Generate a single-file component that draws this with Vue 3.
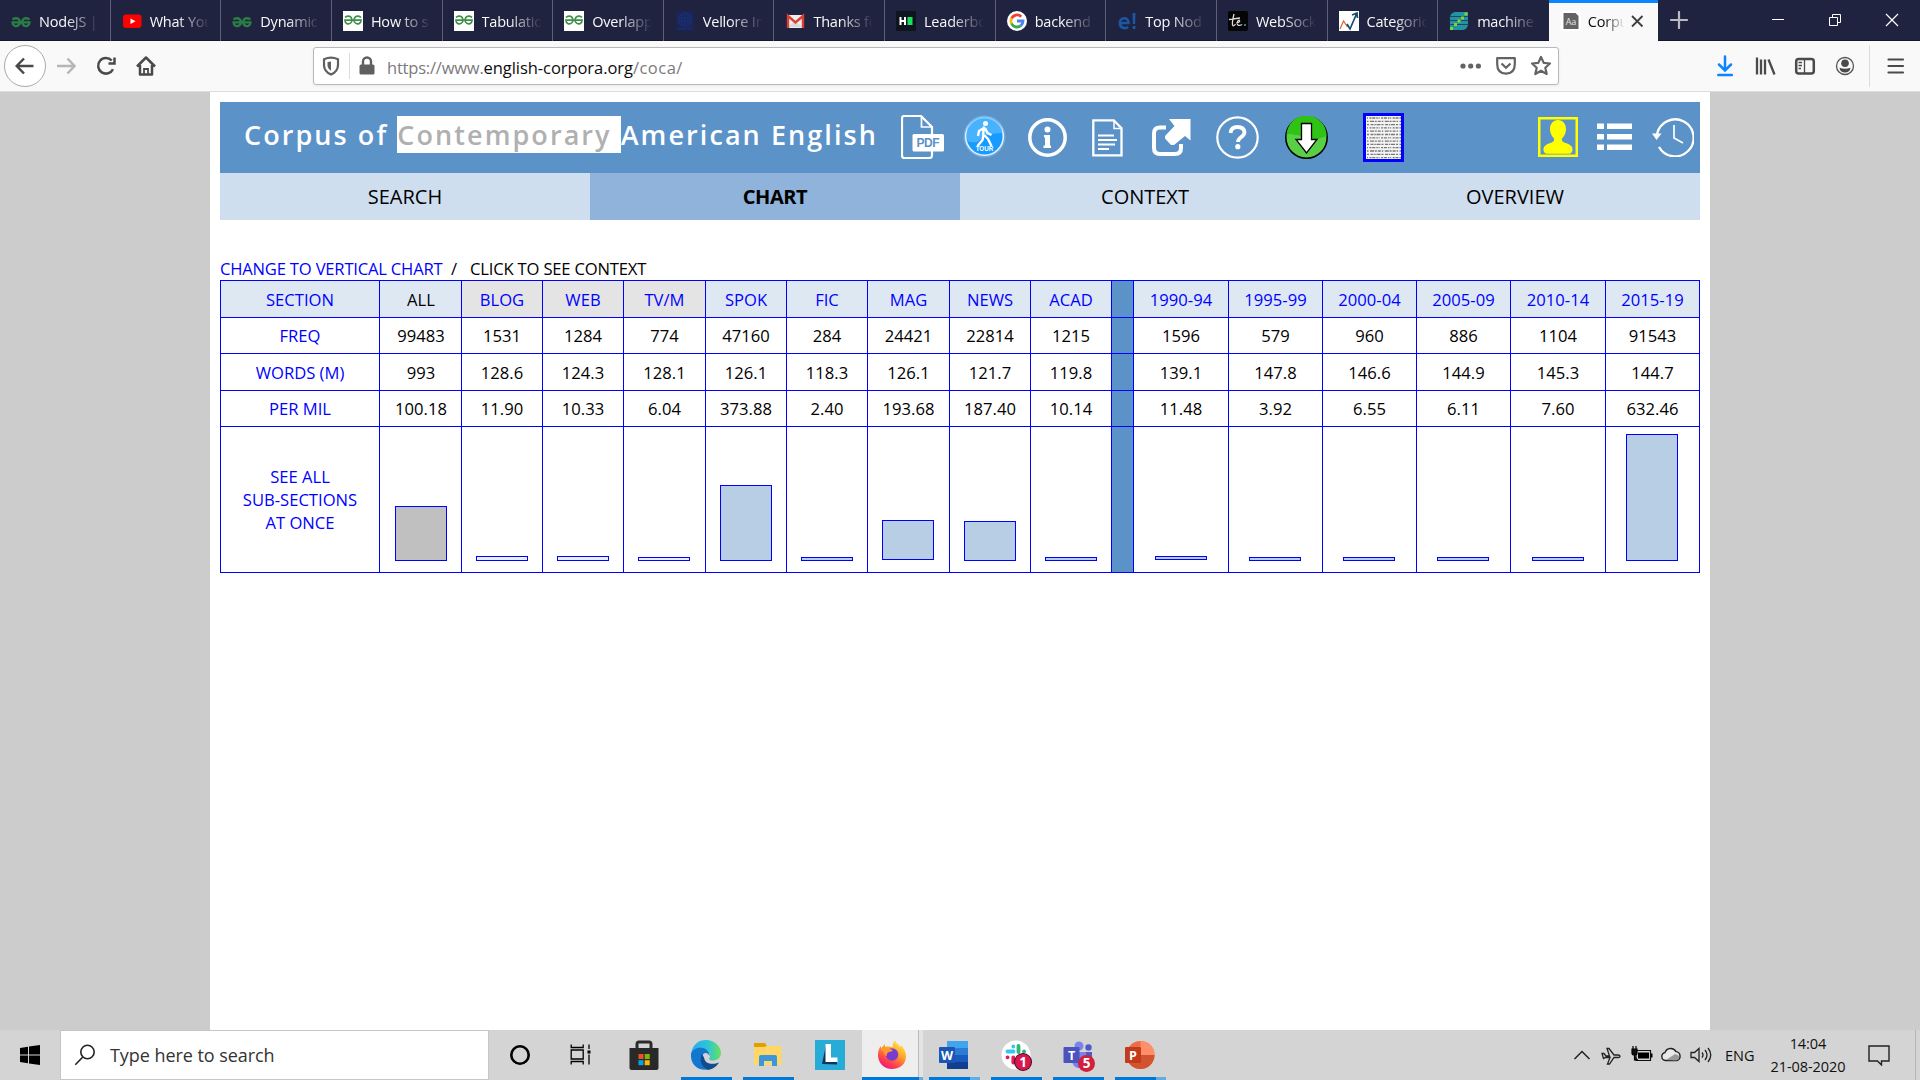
<script setup>
const gfg = (c, w = 1.7) => `<g fill="none" stroke="${c}" stroke-width="${w}"><path d="M1.500 7Q5 4.800 7.500 6.500Q9.500 8.500 8.500 11.500Q6.500 14.500 3.500 13.200Q1.500 12 1.500 9.800H18.500Q18.500 12 16.500 13.200Q13.500 14.500 11.500 11.500Q10.500 8.500 12.500 6.500Q15 4.800 18.500 7"/></g>`
const gfgDark = `<g transform="translate(0 1.500)">${gfg('#2b7d46', 2.3)}</g>`
const gfgBox = '<path fill="#fff" d="M0 0h20v20H0z"/><g transform="translate(.5 -.6) scale(.95 1)">' + gfg('#3f8f49') + '</g>'
const tabs = [
  { title: 'NodeJS |', icon: gfgDark },
  { title: 'What You', icon: '<rect x="1" y="3.500" width="18.500" height="13.500" rx="3" fill="#f00"/><path fill="#fff" d="m8.500 7.500 5 2.800-5 2.800z"/>' },
  { title: 'Dynamic', icon: gfgDark },
  { title: 'How to s', icon: gfgBox },
  { title: 'Tabulatio', icon: gfgBox },
  { title: 'Overlapp', icon: gfgBox },
  { title: 'Vellore In', icon: '<path fill="#1c2452" d="M1 0h18v20H1z"/><g fill="none" stroke="#172f72" stroke-width="1.500"><circle cx="10" cy="8.500" r="6.500"/><path d="M4 7h12M4 10h12M7 4v9m3-11v12m3-10v9M3 17.500h14"/></g>' },
  { title: 'Thanks fo', icon: '<path fill="#eee" d="M2 4h17v13H2z"/><path fill="#d8d8d8" d="m3 16 7-6 7 6z"/><path fill="none" stroke="#d93f33" stroke-width="2.400" d="M3 17V5l7.500 6.500L18 5v12"/>' },
  { title: 'Leaderbo', icon: '<path fill="#0e151f" d="M0 0h20v20H0z"/><path fill="#fff" d="M3.500 6h2v3H8V6h2v8H8v-3H5.500v3h-2z"/><path fill="#1be05f" d="M11.500 6h5v8h-5z"/>' },
  { title: 'backend', icon: '<circle cx="10" cy="10" r="10" fill="#fff"/><g fill="none" stroke-width="2.800"><path stroke="#ea4335" d="M4.500 7.500A6 6 0 0 1 14.200 5.700"/><path stroke="#fbbc05" d="M4.500 7.400a6 6 0 0 0 0 5.200"/><path stroke="#34a853" d="M4.500 12.500a6 6 0 0 0 9.300 2.100"/><path stroke="#4285f4" d="M10 10h6a6 6 0 0 1-2.200 4.600"/></g>' },
  { title: 'Top Nod', icon: '<g fill="none" stroke="#1a57a5" stroke-width="2.600"><path d="M3 12h8.500C11.500 5.500 3 6 2.800 12c0 5.500 6 6 8.200 3.800"/></g><path fill="#1a57a5" d="M15.500 2h3l-.4 11h-2.200zM15.700 15h2.700v3h-2.700z"/>' },
  { title: 'WebSock', icon: '<rect width="20" height="20" rx="2" fill="#050505"/><path fill="none" stroke="#ddd" stroke-width="1.300" d="M1 8.500 12 7M6 3Q4 11 4.500 14q1 2 3-1m1-1q4-1 3-2.500T9 12q.5 4 5 1.500"/><path fill="#277a9c" d="M16 13h2v2h-2z"/>' },
  { title: 'Categoric', icon: '<path fill="#fff" d="M0 0h20v20H0z"/><path fill="none" stroke="#e0663f" stroke-width="1.300" d="m1 18 3.500-8 4 6"/><path fill="none" stroke="#164a78" stroke-width="1.700" d="m8 13 3 5 6.500-15M13 4l5-2 .5 5"/>' },
  { title: 'machine', icon: '<path fill="#2492a5" d="M6 1h13v13q-1 5-6 5H1V7q0-5 5-6z"/><path stroke="#1d3350" stroke-width=".8" d="M0 5.500h20M0 9.500h20M0 13.500h20"/><path fill="#86d22f" d="M15.500 1.500h3v3h-3zM12 5.500h3v3h-3zM8.500 8.500h3v3h-3zM5 12h3v3H5zM1 16h3v3H1z"/>' },
]

const sections = [
  { name: 'ALL', freq: '99483', words: '993', mil: '100.18', bar: 55, kind: 'all' },
  { name: 'BLOG', freq: '1531', words: '128.6', mil: '11.90', bar: 5, kind: 'web' },
  { name: 'WEB', freq: '1284', words: '124.3', mil: '10.33', bar: 5, kind: 'web' },
  { name: 'TV/M', freq: '774', words: '128.1', mil: '6.04', bar: 4, kind: 'web' },
  { name: 'SPOK', freq: '47160', words: '126.1', mil: '373.88', bar: 76 },
  { name: 'FIC', freq: '284', words: '118.3', mil: '2.40', bar: 4 },
  { name: 'MAG', freq: '24421', words: '126.1', mil: '193.68', bar: 40, kind: 'raised' },
  { name: 'NEWS', freq: '22814', words: '121.7', mil: '187.40', bar: 40 },
  { name: 'ACAD', freq: '1215', words: '119.8', mil: '10.14', bar: 4 },
  { name: '', freq: '', words: '', mil: '', kind: 'gap' },
  { name: '1990-94', freq: '1596', words: '139.1', mil: '11.48', bar: 4, kind: 'raised' },
  { name: '1995-99', freq: '579', words: '147.8', mil: '3.92', bar: 4 },
  { name: '2000-04', freq: '960', words: '146.6', mil: '6.55', bar: 4 },
  { name: '2005-09', freq: '886', words: '144.9', mil: '6.11', bar: 4 },
  { name: '2010-14', freq: '1104', words: '145.3', mil: '7.60', bar: 4 },
  { name: '2015-19', freq: '91543', words: '144.7', mil: '632.46', bar: 127 },
]
const rows = [
  { label: 'FREQ', key: 'freq' },
  { label: 'WORDS (M)', key: 'words' },
  { label: 'PER MIL', key: 'mil' },
]
const scanLines = Array.from({ length: 13 }, (_, i) => 4 + i * 3.3)

const apps = [
  { name: 'cortana', icon: '<ellipse cx="15" cy="15" rx="8.700" ry="8.700" fill="none" stroke="#000" stroke-width="2.600"/>' },
  { name: 'taskview', icon: '<g transform="translate(-1.500 -.5)"><g fill="none" stroke="#000" stroke-width="1.300"><path d="M5.700 5v3h12V5M5.700 25v-3h12v3M5.700 10.500h12v9h-12zM23.500 5v4.500M23.500 15v10"/></g><path d="M22 11h3v3h-3z"/></g>' },
  { name: 'store', icon: '<path fill="none" stroke="#2b2b2b" stroke-width="3" d="M8 9V4q0-2 2-2h10q2 0 2 2v5"/><path fill="#292929" d="M.5 8h29v20q0 2-2 2h-25q-2 0-2-2z"/><path fill="#f25022" d="M9.500 14h5v5h-5z"/><path fill="#7fba00" d="M15.700 14h5v5h-5z"/><path fill="#00a4ef" d="M9.500 20.200h5v5h-5z"/><path fill="#ffb900" d="M15.700 20.200h5v5h-5z"/>' },
  { name: 'edge', run: true, icon: '<defs><linearGradient id="e1" x1="0" x2="1"><stop stop-color="#2fa9ea"/><stop offset=".55" stop-color="#2cc5d8"/><stop offset="1" stop-color="#6be05a"/></linearGradient></defs><path fill="url(#e1)" d="M0 15C1 4 8 0 15 0c9 0 15 7 15 13 0 5-4 7.500-8 7.500-5 0-4-2-3-4C20 12 15 8 10 9Q4 9 0 15z"/><path fill="#1277cf" d="M0 14C2 8 8 7 12 8c5 1.500 7 5 6.500 8-2-5-7-3.500-7.500 1-.6 6 5 11 12 10C14 33 1 29 0 17z"/><path fill="#134b8f" d="M11 14c-3 5-1 13 6 15.900 5-.9 9-4 11-7.500-6 2.500-14 2-15-5z"/>' },
  { name: 'files', run: true, icon: '<path fill="#e2a000" d="M1 3h11l2 3v3H1z"/><path fill="#ffd767" d="M1 7h10l3-1h14.500v19H1z"/><path fill="#3c96db" d="M6 26V17q0-2 2-2h14q2 0 2 2v9h-5v-5h-8v5z"/>' },
  { name: 'lapp', icon: '<path fill="#27acd8" d="M0 0h30v30H0z"/><path fill="#10345f" d="m11 5-4 19 15 .5V21l-9-1z"/><path fill="#fff" d="M10.500 4H16v13.500h6.500V22h-12z"/>' },
  { name: 'firefox', state: 'active', run: true, icon: '<defs><linearGradient id="f1" x1=".8" x2=".2" y2="1"><stop stop-color="#fff44f"/><stop offset=".4" stop-color="#ffa22b"/><stop offset=".75" stop-color="#ff3d4f"/><stop offset="1" stop-color="#e31587"/></linearGradient></defs><path fill="url(#f1)" d="M18 0c1 4 4 4.500 6 7V5c3 3 5 7 5 11 0 8-6 13-14 13S1 23 1 15c0-4 1-7 3-9v3c1-2 3-4 4-5v3c3-1 6 0 8 0-1-3 1-5 2-7z"/><circle cx="15" cy="14.500" r="6.200" fill="#7a3bd0"/><path fill="#ff9a2e" d="M3 9q6-3 10 0l3 1q-1 2-4 2-3 1-2 4-3-1-3-4z"/>' },
  { name: 'word', run: true, more: true, icon: '<path fill="#41a5ee" d="M8 1h21v7H8z"/><path fill="#2b7cd3" d="M8 8h21v7H8z"/><path fill="#185abd" d="M8 15h21v7H8z"/><path fill="#103f91" d="M8 22h21v7H8z"/><rect y="7" width="16" height="16" rx="1" fill="#1b56b6"/><text x="8" y="19.500" text-anchor="middle" font-size="12.500" font-weight="700" fill="#fff" font-family="Open Sans,sans-serif">W</text>' },
  { name: 'slack', run: true, badge: '1', icon: '<circle cx="15" cy="15" r="14.500" fill="#fff"/><g stroke-width="3.800" stroke-linecap="round"><path stroke="#36c5f0" d="M12.300 6.500v.1M6.500 11.500h6"/><path stroke="#2eb67d" d="M17.500 6v6M23 11.500h.1"/><path stroke="#e01e5a" d="M12.300 17.500v5M6.500 17.300h.1"/><path stroke="#ecb22e" d="M17.500 17.500h6M17.500 23v.1"/></g>' },
  { name: 'teams', run: true, badge: '5', icon: '<circle cx="16" cy="6" r="4.500" fill="#7b83eb"/><circle cx="25.500" cy="7.500" r="3.200" fill="#5059c9"/><path fill="#7b83eb" d="M9 12h14v10q-1 6-7 6-5 0-7-6z"/><path fill="#5059c9" d="M23 12h6v9q-1 4-6 3z"/><rect x=".5" y="7" width="16" height="16" rx="1" fill="#4b53bc"/><text x="8.500" y="19.500" text-anchor="middle" font-size="12.500" font-weight="700" fill="#fff" font-family="Open Sans,sans-serif">T</text>' },
  { name: 'powerpoint', run: true, more: true, icon: '<circle cx="15.500" cy="15" r="14" fill="#ed6c47"/><path fill="#ff8f6b" d="M15.500 1a14 14 0 0 1 14 14h-14z"/><path fill="#d35230" d="M1.500 15h28a14 14 0 0 1-28 0z"/><rect y="7" width="16" height="16" rx="1" fill="#c13b1b"/><text x="8" y="19.500" text-anchor="middle" font-size="12.500" font-weight="700" fill="#fff" font-family="Open Sans,sans-serif">P</text>' },
]
</script>

<template>
  <div class="screen">
    <div class="tabstrip">
      <div v-for="t in tabs" :key="t.title" class="tab">
        <svg width="20" height="20" v-html="t.icon"></svg>
        <span class="tab-title">{{ t.title }}</span>
      </div>
      <div class="tab current">
        <svg width="20" height="20"><path fill="#fff" d="M0 0h20v20H0z" /><path fill="#636363" d="M2.500 2h12l3 3v13h-15z" /><text x="10" y="14.200" text-anchor="middle" font-size="9" fill="#e4e4e4" font-family="Open Sans,sans-serif">Aa</text></svg>
        <span class="tab-title">Corpu</span>
        <svg class="tab-close" width="14" height="14"><path d="m2 2 10.500 10.500M12.500 2 2 12.500" stroke="#3f3f42" stroke-width="1.800" /></svg>
      </div>
      <svg class="newtab" width="18" height="18"><path d="M9 1v16M1 9h16" stroke="#b9bac6" stroke-width="2.200" stroke-linecap="round" /></svg>
      <div class="winctl">
        <svg width="14" height="14" stroke="#fff" fill="none"><path d="M1 6.500h12" /></svg>
        <svg width="14" height="14" stroke="#fff" fill="none"><path d="M1.500 4.500h8v8h-8zM4.500 4.500v-3h8v8h-3" /></svg>
        <svg width="14" height="14" stroke="#fff" fill="none"><path d="m1 1 12 12M13 1 1 13" stroke-width="1.200" /></svg>
      </div>
    </div>

    <div class="toolbar">
      <div class="back"><svg width="20" height="20" class="ic"><path d="M18.500 10H2M9 2.500 1.700 10 9 17.500" /></svg></div>
      <svg width="20" height="20" class="ic fwd"><path d="M1 10h17M11.500 2.500 18.500 10l-7 7.500" /></svg>
      <svg width="20" height="20" class="ic reload"><path d="M17 13.200A7.800 7.800 0 1 1 15.700 4.500M18.500 1.500v6h-6" /></svg>
      <svg width="20" height="20" class="ic home"><path d="M1 10.500 10 1.500l9 9M4 9v9.500h12V9" stroke-linejoin="round" /><path d="M8 19v-6h4v6" stroke-width="1.800" /></svg>
      <div class="urlbar">
        <svg width="18" height="20" class="shield"><path d="M2 3.200Q9 .2 16 3.200V9q0 6.500-7 9.500-7-3-7-9.500z" fill="none" stroke="#606060" stroke-width="2.200" /><path d="M9 5.500Q7 5.600 5.500 6.300V9Q5.500 12.500 9 14.800z" fill="#606060" /></svg>
        <i class="usep"></i>
        <svg width="18" height="20" class="lock"><rect x="1.500" y="8.500" width="15" height="10" rx="1.500" fill="#606060" /><path d="M5 9V5.500a4 4 0 0 1 8 0V9" fill="none" stroke="#606060" stroke-width="2.400" /></svg>
        <span class="url">https://www.<b>english-corpora.org</b><span class="path">/coca/</span></span>
        <svg width="22" height="6" class="dots"><circle cx="3" cy="3" r="2.600" /><circle cx="10.700" cy="3" r="2.600" /><circle cx="18.400" cy="3" r="2.600" /></svg>
        <svg width="22" height="20" class="ic g"><path d="M2.200 2.200h17.600v6q0 9-8.800 9.500-8.800-.5-8.800-9.500z" stroke-linejoin="round" /><path d="m6.500 7.500 4.500 4.300 4.500-4.300" /></svg>
        <svg width="22" height="22" class="ic g star"><path d="m11 2 2.700 5.900 6.300.6-4.700 4.200 1.400 6.300-5.700-3.300L5.300 19l1.400-6.300L2 8.500l6.300-.6z" stroke-linejoin="round" /></svg>
      </div>
      <div class="tools">
        <svg width="20" height="22" class="ic dl"><path d="M10 1.500v13M4 9.500l6 6 6-6M3.300 20h13.500" stroke-linecap="round" /></svg>
        <svg width="22" height="20" class="ic"><path d="M2 1.500v17M6 3.500v15M10 3.500v15M13.500 3.500l6 15" stroke-width="2.300" /></svg>
        <svg width="22" height="20" class="ic"><rect x="2.200" y="3" width="17.600" height="14.500" rx="2.500" /><path d="M10.500 3v14.500M4.500 6.500h3.500M4.500 9.500h3.500M4.500 12.500h2.500" stroke-width="1.300" /></svg>
        <svg width="20" height="20"><circle cx="10" cy="10" r="8.500" fill="none" stroke="#555" stroke-width="1.300" /><circle cx="10" cy="7.300" r="3.800" fill="#4a4a4a" /><path d="M4.500 11.700q5.500 2 11 0Q15 16.500 10 16.500t-5.500-4.800z" fill="#4a4a4a" /></svg>
        <i class="tsep"></i>
        <svg width="18" height="18" class="ic"><path d="M1.500 2.500h14.500M1.500 9h14.500M1.500 15.500h14.500" stroke-linecap="round" stroke-width="2.200" /></svg>
      </div>
    </div>

    <div class="viewport">
      <div class="page">
        <header class="banner">
          <h1>Corpus of <mark>Contemporary </mark>American English</h1>
          <div class="tools-left">
            <svg width="43" height="44" class="i-pdf"><path d="M31 35v5.500q0 2.500-2.500 2.500H3.500Q1 43 1 40.500v-37Q1 1 3.500 1H20l11 11v7" fill="none" stroke="#fff" stroke-width="2.200" /><path d="M20.500 1.500V12H31" fill="none" stroke="#fff" stroke-width="1.700" /><rect x="11.500" y="19" width="31.500" height="17.500" rx="1.500" fill="#fff" /><text x="27" y="32" text-anchor="middle" textLength="23" font-size="12" font-weight="700" fill="#5b92c8" font-family="Liberation Sans,sans-serif">PDF</text></svg>
            <svg width="43" height="43" class="i-tour"><circle cx="21.500" cy="21.500" r="21" fill="#7aa9d8" /><circle cx="21.500" cy="21.500" r="18.800" fill="#189bff" stroke="#e6f3ff" stroke-width="1.500" /><path d="M3.500 20a18 18 0 0 1 36-2q-18 0-25 9-6 1-10-1z" fill="#5ebcff" opacity=".7" /><circle cx="22.500" cy="8.500" r="2.500" fill="#fff" /><path d="m21 11.500-1 9M21 13l-5 3-1 5M22 13l2.500 5 4 2M20.500 20l-1 5-5 6M21 20l4 4 3.500 7" fill="none" stroke="#fff" stroke-width="2.400" /><text x="21.500" y="36" text-anchor="middle" font-size="6.300" font-weight="700" fill="#fff" font-family="Liberation Sans,sans-serif">TOUR</text></svg>
            <svg width="39" height="39" class="i-info"><circle cx="19.500" cy="19.500" r="17.700" fill="none" stroke="#fff" stroke-width="3.500" /><circle cx="19.500" cy="11.500" r="3" fill="#fff" /><path d="M16 17h6v10.500h1V30h-7.500v-2.500H17v-8h-1z" fill="#fff" /></svg>
            <svg width="31" height="38" class="i-doc"><path d="M1.300 1.300h20.500l7.700 8v27H1.300z" fill="none" stroke="#fff" stroke-width="2.300" /><path d="M22 1v8.500h8" fill="none" stroke="#fff" stroke-width="1.500" /><path d="M6 16.500h16M6 21h19M6 25.500h17M6 30h11" stroke="#fff" stroke-width="1.900" /></svg>
            <svg width="39" height="38" class="i-ext"><path d="M14 8.500H8q-6 0-6 6V29q0 6 6 6h15q6 0 6-6v-4" fill="none" stroke="#fff" stroke-width="4" /><path d="M17 0h21.500v21.500L33 17l-11 9h-3l-6-6.500v-2.500L22.500 7z" fill="#fff" /></svg>
            <svg width="43" height="43" class="i-help"><circle cx="21.500" cy="21.500" r="20.200" fill="none" stroke="#fff" stroke-width="2.200" /><path d="M14.500 17q.5-6 7-6t7 5.300c0 4.700-6.500 4.700-6.500 9.700" fill="none" stroke="#fff" stroke-width="3.800" /><circle cx="21.800" cy="30.700" r="2.600" fill="#fff" /></svg>
            <svg width="43" height="43" class="i-down"><circle cx="21.500" cy="21.500" r="20.700" fill="#59cf45" stroke="#000" stroke-width="1.500" /><path d="M1.500 19a20 20 0 0 1 40 1Q32 23 22 27q-5-9-12-8-5-2-8.500 0z" fill="#2fc315" /><path d="M16.500 7.500h10v16H32L21.500 37 11 23.500h5.500z" fill="#fff" stroke="#000" stroke-width="1.300" /></svg>
            <svg width="41" height="49" class="i-scan"><path fill="#00f" d="M0 0h41v49H0z" /><path fill="#f4f4f4" d="M3 3h35v43H3z" /><g stroke="#777" stroke-width="1.300"><path v-for="(y, i) in scanLines" :key="y" :d="`M4 ${y + 1}h34`" :stroke-dasharray="i % 3 === 0 ? '1 1.500 2 .8 3 1 1.500 .8' : i % 3 === 1 ? '1.500 1.500 4 .8 2 1 3 1' : '2 1.500 3 .8 1.500 .7 4 1'" /></g></svg>
          </div>
          <div class="tools-right">
            <svg width="40" height="40"><path d="M1.250 1.250h37.500v37.500H1.250z" fill="none" stroke="#ff0" stroke-width="2.500" /><path d="M20 3c5 0 8 4 8 9 0 4-1.500 7-4 9.500-.5 3 1.500 4 5 5 4 1.300 6 4 5.500 7-.5 2.500-2 3.300-4 3.300h-21c-2 0-3.500-.8-4-3.300-.5-3 1.500-5.700 5.500-7 3.500-1 5.500-2 5-5C13.500 19 12 16 12 12c0-5 3-9 8-9z" fill="#ff0" /></svg>
            <svg width="36" height="28"><path d="M0 .5h7v5.500H0zM10 .5h25v5.500H10zM0 11h7v5.500H0zM10 11h25v5.500H10zM0 21.500h7V27H0zM10 21.500h25V27H10z" fill="#fff" /></svg>
            <svg width="42" height="40"><path d="M5 17A18.500 18.500 0 1 1 7 30" fill="none" stroke="#fff" stroke-width="2.300" /><path d="M0 16.500h9.500l-5 6.500z" fill="#fff" /><path d="M22 8v13l9 5" fill="none" stroke="#fff" stroke-width="1.700" /></svg>
          </div>
        </header>
        <nav class="nav">
          <a>SEARCH</a><a class="on">CHART</a><a>CONTEXT</a><a>OVERVIEW</a>
        </nav>
        <p class="links"><a>CHANGE TO VERTICAL CHART</a><span class="slash">/</span><span class="click">CLICK TO SEE CONTEXT</span></p>
        <div class="grid">
          <div class="c head lbl">SECTION</div>
          <div v-for="(s, i) in sections" :key="'h' + i" class="c head lbl" :class="s.kind">{{ s.name }}</div>
          <template v-for="r in rows" :key="r.key">
            <div class="c lbl">{{ r.label }}</div>
            <div v-for="(s, i) in sections" :key="r.key + i" class="c" :class="s.kind">{{ s[r.key] }}</div>
          </template>
          <div class="c lbl see">SEE ALL<br />SUB-SECTIONS<br />AT ONCE</div>
          <div v-for="(s, i) in sections" :key="'b' + i" class="c barcell" :class="s.kind">
            <div v-if="s.bar" class="bar" :style="{ height: s.bar + 'px' }"></div>
          </div>
        </div>
      </div>
    </div>

    <div class="taskbar">
      <div class="start"><svg width="20" height="20"><path d="m0 3 8-1.200v7.700H0zM9 1.600 20 0v9.500H9zM0 10.500h8v7.700L0 17zM9 10.500h11V20L9 18.400z" /></svg></div>
      <div class="search">
        <svg width="22" height="22"><circle cx="13.500" cy="8" r="6.700" fill="none" stroke="#222" stroke-width="1.600" /><path d="m8.800 13-7.500 7.800" stroke="#222" stroke-width="1.600" /></svg>
        <span>Type here to search</span>
      </div>
      <div v-for="a in apps" :key="a.name" class="app" :class="[a.state, { run: a.run, more: a.more }]">
        <svg width="30" height="30" v-html="a.icon"></svg>
        <span v-if="a.badge" class="badge" :class="'b-' + a.name">{{ a.badge }}</span>
      </div>
      <div class="tray">
        <svg width="18" height="12" class="t-chev"><path d="m1.500 10 7.500-7.500 7.500 7.500" fill="none" stroke="#222" stroke-width="1.500" /></svg>
        <svg width="20" height="20" class="t-air"><path d="M1 8.500h2l2 2.500h3.500L6 3.500h2l5 6.500h4q2 0 2 1.300t-2 1.200h-4l-4.500 6.500h-2L9 12.500H4.500L2.500 13.500z" fill="none" stroke="#222" stroke-width="1.300" /></svg>
        <svg width="22" height="18" class="t-bat"><path d="M5 4.500h14.500v10H5z" fill="none" stroke="#111" stroke-width="1.200" /><path d="M7 6.500h11v6H7z" /><path d="M20 7.500h1.500v4H20z" /><path d="M1 3v4q0 2 2.500 2T6 7V3zM3.500 9v5H7M2 0v3M5 0v3" stroke="#000" stroke-width="1.200" fill="#111" /></svg>
        <svg width="22" height="16" class="t-cloud"><path d="M5.500 13.500a4 4 0 0 1-.5-7.900 6 6 0 0 1 11-1 4.600 4.600 0 0 1 1 8.900z" fill="#e9e9e9" stroke="#222" stroke-width="1.400" /><path d="m6 13 9-6q5 1 4 4-.5 2-3 2.500z" fill="#999" /></svg>
        <svg width="22" height="18" class="t-spk"><path d="M1 6.500h3.500L9 2.500v13L4.500 11.500H1z" fill="none" stroke="#222" stroke-width="1.300" /><path d="M12 6.500q2 2.500 0 5M15 4q4 5 0 10M18 2q5.500 7 0 14" fill="none" stroke="#222" stroke-width="1.300" /></svg>
        <span class="lang">ENG</span>
        <div class="clock"><span>14:04</span><span class="date">21-08-2020</span></div>
        <svg width="22" height="22" class="t-note"><path d="M1 2h20v15h-7.500v4l-4-4H1z" fill="none" stroke="#222" stroke-width="1.400" /></svg>
        <i class="peek"></i>
      </div>
    </div>
  </div>
</template>

<style>
body { margin: 0; overflow: hidden; }
</style>

<style scoped>
.screen { width: 1920px; height: 1080px; display: flex; flex-direction: column; font-family: "Open Sans", "Noto Sans", sans-serif; overflow: hidden; color: #000; }
.screen * { box-sizing: border-box; }
svg { display: block; flex: none; }

.tabstrip { height: 41px; background: #20233f; display: flex; border-bottom: 1px solid #15172c; flex: none; }
.tab { width: 110.64px; flex: none; height: 41px; padding: 11px 0 0 11px; display: flex; border-right: 1px solid #5d5f76; }
.tab-title { margin-left: 8px; width: 60px; white-space: nowrap; font-size: 14.5px; line-height: 22px; letter-spacing: -.2px; color: #f9f9fa; -webkit-mask-image: linear-gradient(90deg, #000 45%, transparent 100%); mask-image: linear-gradient(90deg, #000 45%, transparent 100%); }
.tab:nth-child(14) { border-right: 0; }
.tab.current { width: 109px; background: #f9f9fa; border-right: 0; border-top: 3px solid #0a84ff; padding-top: 8px; padding-left: 12px; }
.current .tab-title { width: 37px; margin-left: 7px; color: #0c0c0d; }
.tab-close { margin: 3px 0 0 5px; }
.newtab { margin: 11px 0 0 12px; }
.winctl { margin-left: auto; display: flex; gap: 43px; padding: 13px 21px 0 0; }

.toolbar { height: 51px; background: #f9f9fa; border-bottom: 1px solid #ddd; display: flex; align-items: center; flex: none; }
.ic { fill: none; stroke: #4a4a4c; stroke-width: 2.5; }
.ic.g { stroke: #636365; stroke-width: 2.2; }
.back { width: 42px; height: 42px; margin-left: 4px; border: 1px solid #aaa; border-radius: 50%; background: #fff; display: flex; align-items: center; justify-content: center; }
.fwd { margin-left: 10px; stroke: #b6b6b8; }
.reload { margin-left: 20px; }
.home { margin-left: 20px; }
.urlbar { margin-left: 157px; width: 1246px; height: 38px; border: 1px solid #b9b9bb; border-radius: 3px; background: #fff; display: flex; align-items: center; box-shadow: 0 1px 3px rgba(0,0,0,.08); }
.shield { margin-left: 8px; }
.usep { width: 1px; height: 26px; background: #dcdcdc; margin-left: 9px; }
.lock { margin-left: 8px; }
.url { margin-left: 11px; font-size: 16.5px; line-height: 24px; color: #7a7a7c; letter-spacing: -.2px; flex: 1; padding-top: 3px; }
.url b { font-weight: 400; color: #0c0c0d; letter-spacing: -.06px; }
.path { letter-spacing: .5px; }
.dots { fill: #636365; margin-right: 13px; }
.star { margin: 0 6px 0 13px; }
.tools { display: flex; align-items: center; margin-left: 156px; }
.tools svg:nth-child(2) { margin-left: 20px; }
.tools svg:nth-child(3) { margin-left: 17px; }
.tools svg:nth-child(4) { margin-left: 19px; }
.dl { stroke: #0a84ff; }
.tsep { width: 1px; height: 42px; background: #dcdcdc; margin: 0 17px 0 14px; }

.viewport { flex: 1; background: #ccc; display: flex; justify-content: center; min-height: 0; }
.page { width: 1500px; background: #fff; padding: 10px 10px 0; }
.banner { height: 71px; background: #5b92c8; display: flex; color: #fff; }
h1 { margin: 14px 0 0 24px; width: 632px; font-size: 27px; line-height: 37px; font-weight: 600; letter-spacing: 2.07px; white-space: nowrap; height: 37px; }
mark { background: #fff; color: #b0b0b0; display: inline-block; white-space: pre; height: 37px; }
.tools-left { display: flex; margin-left: 25px; width: 503px; flex: none; align-items: flex-start; }
.i-pdf { margin-top: 13px; }
.i-tour { margin: 13px 0 0 18.5px; }
.i-info { margin: 16px 0 0 22.5px; }
.i-doc { margin: 17px 0 0 25px; }
.i-ext { margin: 17px 0 0 29px; }
.i-help { margin: 14px 0 0 25px; }
.i-down { margin: 14px 0 0 26px; }
.i-scan { margin: 11px 0 0 35px; }
.tools-right { display: flex; align-items: center; margin-left: auto; padding: 0 6px 1px 0; }
.tools-right svg + svg { margin-left: 19px; }

.nav { display: flex; height: 47px; background: #cfdeef; }
.nav a { flex: 1; text-align: center; font-size: 20px; line-height: 47px; }
.nav a.on { background: #8fb3da; font-weight: 700; letter-spacing: -.45px; }

.links { margin: 37px 0 0; height: 23px; display: flex; font-size: 16.6px; line-height: 23px; white-space: nowrap; }
.links a { color: #00f; width: 231px; letter-spacing: -.2px; }
.slash { width: 19px; }
.click { letter-spacing: -.18px; }

.grid { display: grid; width: 1480px; grid-template-columns: 159px 82px 81px 81px 82px 81px 81px 82px 81px 81px 22px 95px 94px 94px 94px 95px 94px; grid-template-rows: 37px 36px 37px 36px 146px; border-right: 1px solid #00f; border-bottom: 1px solid #00f; font-size: 16.6px; }
.c { border-left: 1px solid #00f; border-top: 1px solid #00f; display: flex; align-items: center; justify-content: center; white-space: nowrap; min-width: 0; }
.head { background: #dee8f2; }
.lbl { color: #00f; }
.c.all { padding-left: 1px; }
.lbl.all { color: #000; }
.head.web { background: #e4e4e4; }
.c.gap { background: #5b92c8; }
.see { line-height: 23px; text-align: center; padding-bottom: 1px; }
.barcell { align-items: flex-end; padding-bottom: 11px; padding-right: .4px; }
.barcell.raised { padding-bottom: 12px; }
.bar { width: 52px; border: 1px solid #00f; background: #b8cee4; }
.all .bar { background: #c0c0c0; }
.web .bar { background: #e8eef6; }

.taskbar { height: 50px; background: #d4d4d4; display: flex; flex: none; }
.start { width: 60px; display: flex; align-items: center; justify-content: center; }
.search { width: 429px; background: #fff; border: 1px solid #c6c6c6; display: flex; align-items: center; padding-left: 13px; font-size: 18px; letter-spacing: -.06px; color: #333; }
.search span { margin-left: 14px; padding-bottom: 1px; }
.app { width: 62px; position: relative; display: flex; align-items: center; justify-content: center; }
.app.run::after { content: ""; position: absolute; left: 6px; bottom: 0; width: 51px; height: 3px; background: #0078d7; }
.app.more::after { background: linear-gradient(90deg, #0078d7 41px, #63ade6 41px); }
.app.active::before { content: ""; position: absolute; left: 1px; top: 0; width: 61px; height: 50px; background: linear-gradient(90deg, #eee 56px, #bbb 56px, #bbb 57px, #e4e4e4 57px); }
.app.active svg { position: relative; }
.app.active::after { left: 1px; width: 61px; background: linear-gradient(90deg, #0078d7 57px, #63ade6 57px); }
.badge { position: absolute; left: 30px; top: 24px; width: 16px; height: 16px; border-radius: 50%; background: #d8174f; box-shadow: 0 0 0 1px #3d0b1c; color: #fff; font-size: 13.5px; line-height: 16px; font-weight: 700; text-align: center; }
.b-teams { background: #d11f3c; box-shadow: none; left: 31px; top: 25px; width: 17px; height: 17px; line-height: 17px; }
.tray { margin-left: auto; display: flex; align-items: center; color: #111; }
.t-air { margin-left: 10px; }
.t-bat { margin-left: 10px; }
.t-cloud { margin-left: 7px; }
.t-spk { margin-left: 8px; }
.lang { margin-left: 13px; width: 32px; font-size: 14.5px; letter-spacing: 0; }
.clock { margin-left: 11px; width: 80px; display: flex; flex-direction: column; align-items: center; font-size: 14.5px; line-height: 23px; letter-spacing: -.05px; }
.t-note { margin-left: 20px; }
.peek { width: 1px; height: 50px; background: #b5b5b5; margin: 0 4px 0 25px; }
</style>
